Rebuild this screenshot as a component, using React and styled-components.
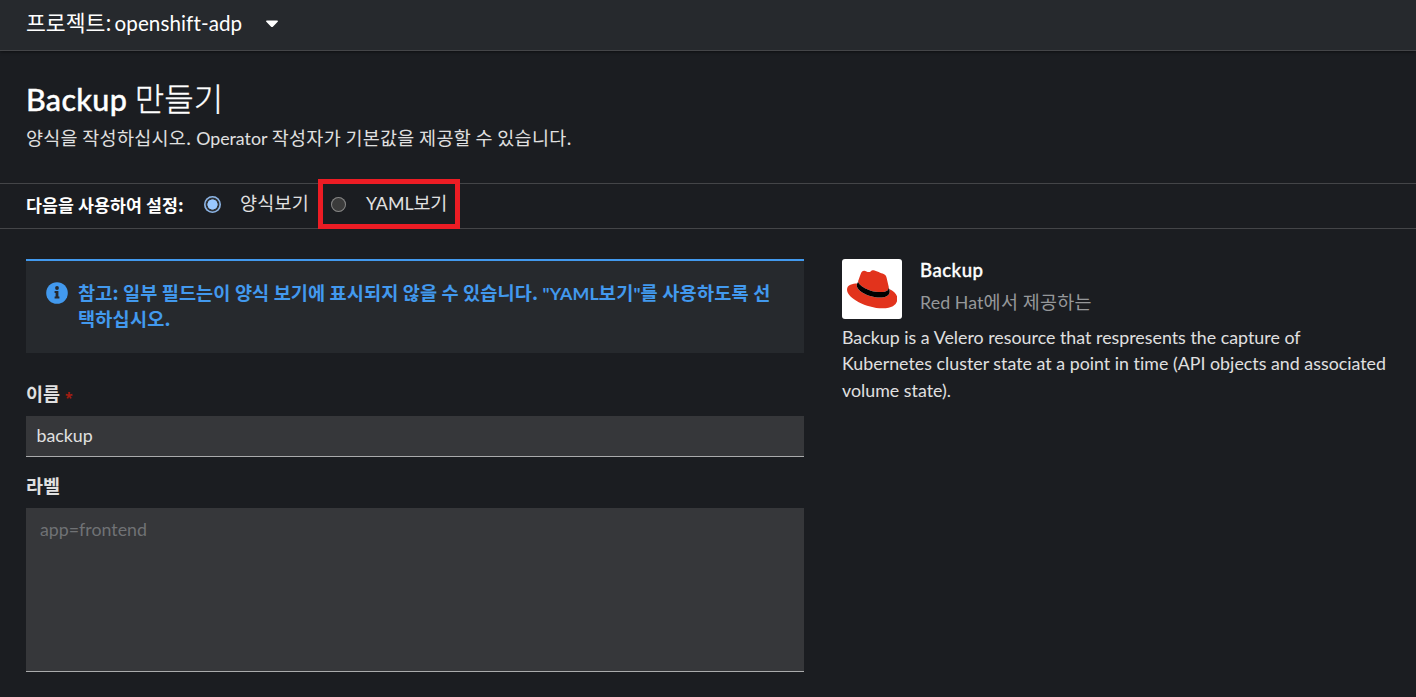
import React from 'react';
import styled, { createGlobalStyle, css } from 'styled-components';

const GlobalStyle = createGlobalStyle`
  *, *::before, *::after { box-sizing: border-box; }
  body {
    margin: 0;
    background: #1b1d21;
    color: #e0e0e0;
    font-family: Lato, "Noto Sans CJK KR", sans-serif;
    font-size: 17.8px;
    font-variant-ligatures: none;
  }
`;

const Page = styled.div`
  height: 697px;
  overflow: hidden;
  white-space: nowrap;
`;

const Ko = styled.span`
  font-family: "Noto Sans CJK KR", sans-serif;
  font-size: ${p => p.$size || 18.5}px;
  letter-spacing: ${p => p.$ls || 0}px;
  line-height: 0;
`;

const La = styled.span`
  letter-spacing: ${p => p.$ls || 0}px;
  margin-left: ${p => p.$ml || 0}px;
  line-height: 0;
`;

const ProjectBar = styled.header`
  display: flex;
  align-items: center;
  height: 51px;
  padding: 0 0 4px 26px;
  background: #26292d;
  border-bottom: 1px solid #444548;
  box-shadow: 0 1px 3px rgba(0, 0, 0, 0.5);
  color: #fff;
`;

const ProjectName = styled.div`
  width: 240px;
  font-size: 20.6px;
  line-height: 30px;
`;

const Caret = styled.svg`
  display: block;
  width: 12px;
  height: 8px;
  margin-top: 2px;
`;

const Heading = styled.section`
  height: 132px;
  padding: 28px 26px 0;
`;

const Title = styled.h1`
  margin: 0;
  font-size: 30.5px;
  font-weight: 500;
  line-height: 40px;
  color: #fff;
  -webkit-text-stroke: 0.4px #fff;

  ${Ko} { -webkit-text-stroke: 0.35px #fff; font-weight: 300; }
`;

const Subtitle = styled.p`
  margin: 6px 0 0;
  line-height: 26px;
`;

const ViewStrip = styled.div`
  display: flex;
  height: 46px;
  padding: 0 26px;
  border-top: 1px solid #444548;
  border-bottom: 1px solid #444548;
`;

const StripLabel = styled.span`
  width: 177px;
  line-height: 43px;
  font-weight: 700;
  color: #fff;
`;

const Option = styled.label`
  position: relative;
  display: flex;
  align-items: center;
  height: 40px;
  width: ${p => p.$width}px;
`;

const OptionText = styled.span`
  padding-bottom: 2px;
`;

const Radio = styled.input.attrs({ type: 'radio' })`
  appearance: none;
  flex: none;
  width: 17px;
  height: 17px;
  margin: 0 19px 0 1px;
  border: 1px solid transparent;
  border-radius: 50%;
  background: #3b3b3b;
  background-clip: padding-box;
  box-shadow: inset 0 0 0 1px #858585;

  ${p => p.checked && css`
    border: 0;
    background: radial-gradient(circle, #99c8ff 4.8px, #2f3236 5.4px);
    box-shadow: inset 0 0 0 1.6px #8bb4e6;
  `}
`;

const Highlight = styled.span`
  position: absolute;
  left: -11px;
  top: -5px;
  width: 142px;
  height: 50px;
  border: 5px solid #ed1c24;
`;

const Content = styled.main`
  display: flex;
  gap: 38px;
  padding: 30px 26px 0;
`;

const Form = styled.form`
  flex: none;
  width: 778px;
`;

const Alert = styled.div`
  display: flex;
  gap: 10px;
  height: 94px;
  padding: 19px 20px 0;
  background: #26292d;
  border-top: 2px solid #4299ee;
  color: #4299ee;
  font-weight: 700;
`;

const InfoIcon = styled.svg`
  flex: none;
  width: 22px;
  height: 22px;
  margin-top: 2px;
`;

const AlertText = styled.div`
  line-height: 26px;
`;

const FieldLabel = styled.label`
  display: block;
  font-weight: 700;
  line-height: 26px;
  margin-top: ${p => p.$mt}px;
`;

const Required = styled.span`
  margin-left: 5px;
  color: #a31d12;
  font-family: "Noto Sans", sans-serif;
  font-size: 14px;
  font-weight: 700;
  line-height: 0;
  vertical-align: -2px;
`;

const field = css`
  display: block;
  width: 100%;
  margin: 9px 0 0;
  border: 0;
  border-bottom: 1px solid #aaabac;
  border-radius: 0;
  background: #36373a;
  color: #e0e0e0;
  font: 17.8px/26px Lato, sans-serif;
  outline: none;
  resize: none;
`;

const TextInput = styled.input`
  ${field}
  height: 41px;
  padding: 0 10px 2px 10.5px;
`;

const LabelArea = styled.textarea`
  ${field}
  height: 164px;
  padding: 8px 14px;
  &::placeholder { color: #707275; opacity: 1; }
`;

const Aside = styled.aside`
  flex: none;
  width: 560px;
`;

const Provider = styled.div`
  display: flex;
  gap: 18px;
  height: 65px;
`;

const Logo = styled.div`
  display: flex;
  align-items: center;
  justify-content: center;
  width: 60px;
  height: 60px;
  border-radius: 3px;
  background: #fff;
`;

const ResourceName = styled.h2`
  margin: 0;
  font-size: 18.6px;
  font-weight: 500;
  line-height: 23px;
  letter-spacing: 0.5px;
  color: #fff;
  -webkit-text-stroke: 0.35px #fff;
`;

const ProvidedBy = styled.div`
  margin-top: 7px;
  line-height: 26px;
  color: #96989a;
`;

const Description = styled.p`
  margin: 0;
  font-size: 17.8px;
  line-height: 26.4px;
  letter-spacing: 0.02px;
`;

function RedHat() {
  return (
    <svg width="50.4" height="50.4" viewBox="0 0 24 24">
      <path fill="#e2331c" d="M16.009 13.386c1.577 0 3.86-.326 3.86-2.202a1.765 1.765 0 0 0-.04-.431l-.94-4.08c-.216-.898-.406-1.305-1.982-2.093-1.223-.625-3.888-1.658-4.676-1.658-.733 0-.947.946-1.822.946-.842 0-1.467-.706-2.255-.706-.757 0-1.25.515-1.63 1.576 0 0-1.06 2.99-1.197 3.424a.81.81 0 0 0-.028.245c0 1.162 4.577 4.974 10.71 4.974m4.101-1.435c.218 1.032.218 1.14.218 1.277 0 1.765-1.984 2.745-4.593 2.745-5.895.004-11.06-3.451-11.06-5.734a2.326 2.326 0 0 1 .19-.925C2.746 9.415 0 9.794 0 12.217c0 3.969 9.405 8.861 16.851 8.861 5.71 0 7.149-2.582 7.149-4.62 0-1.605-1.387-3.425-3.887-4.512" />
      <path fill="#000" d="M20.11 11.951c.218 1.032.218 1.14.218 1.277 0 1.765-1.984 2.745-4.593 2.745-5.895.004-11.06-3.451-11.06-5.734a2.326 2.326 0 0 1 .19-.925l.434-.902c0 1.162 4.577 4.974 10.71 4.974 1.577 0 3.86-.326 3.86-2.202z" />
    </svg>
  );
}

export default function App() {
  return (
    <Page>
      <GlobalStyle />
      <ProjectBar>
        <ProjectName>
          <Ko $size={21.6}>프로젝트:</Ko><La $ml={3} $ls={0.1}>openshift-adp</La>
        </ProjectName>
        <Caret viewBox="0 0 12 8"><path fill="#fff" d="M.8.5h10.4c.7 0 1 .8.5 1.300L6.900 6.700c-.5.5-1.300.5-1.800 0L.3 1.800C-.2 1.300.1.5.8.5z" /></Caret>
      </ProjectBar>

      <Heading>
        <Title><La $ls={0.3}>Backup</La> <Ko $size={32}>만들기</Ko></Title>
        <Subtitle><Ko $ls={0.28}>양식을 작성하십시오.</Ko> <La>Operator</La> <Ko $ls={0.3}>작성자가 기본값을 제공할 수 있습니다.</Ko></Subtitle>
      </Heading>

      <ViewStrip>
        <StripLabel><Ko $size={17.3} $ls={0.1}>다음을 사용하여 설정:</Ko></StripLabel>
        <Option $width={126}><Radio checked readOnly /><OptionText><Ko $ls={0.2}>양식보기</Ko></OptionText></Option>
        <Option $width={130}><Radio readOnly /><OptionText><La>YAML</La><Ko $ls={-0.3}>보기</Ko></OptionText><Highlight /></Option>
      </ViewStrip>

      <Content>
        <Form>
          <Alert>
            <InfoIcon viewBox="0 0 22 22">
              <circle cx="11" cy="11" r="10.8" fill="#4299ee" />
              <path fill="#26292d" d="M9.200 9.100h3.200v5.500h1v2H8.600v-2h1v-3.500h-1v-2z" />
              <circle cx="11" cy="6" r="1.900" fill="#26292d" />
            </InfoIcon>
            <AlertText>
              <Ko $size={18.6} $ls={0.11}>참고: 일부 필드는이 양식 보기에 표시되지 않을 수 있습니다.</Ko> <La $ls={0.15}>"YAML</La><Ko $size={18.6} $ls={0.2}>보기</Ko><La>"</La><Ko $size={18.6} $ls={0.22}>를 사용하도록 선</Ko><br />
              <Ko $size={18.6} $ls={0.2}>택하십시오.</Ko>
            </AlertText>
          </Alert>
          <FieldLabel $mt={28}><Ko>이름</Ko><Required>*</Required></FieldLabel>
          <TextInput defaultValue="backup" />
          <FieldLabel $mt={16}><Ko>라벨</Ko></FieldLabel>
          <LabelArea placeholder="app=frontend" />
        </Form>

        <Aside>
          <Provider>
            <Logo><RedHat /></Logo>
            <div>
              <ResourceName>Backup</ResourceName>
              <ProvidedBy><La $ls={0.1}>Red Hat</La><Ko $ls={0.3}>에서 제공하는</Ko></ProvidedBy>
            </div>
          </Provider>
          <Description>
            Backup is a Velero resource that respresents the capture of<br />
            Kubernetes cluster state at a point in time (API objects and associated<br />
            volume state).
          </Description>
        </Aside>
      </Content>
    </Page>
  );
}
